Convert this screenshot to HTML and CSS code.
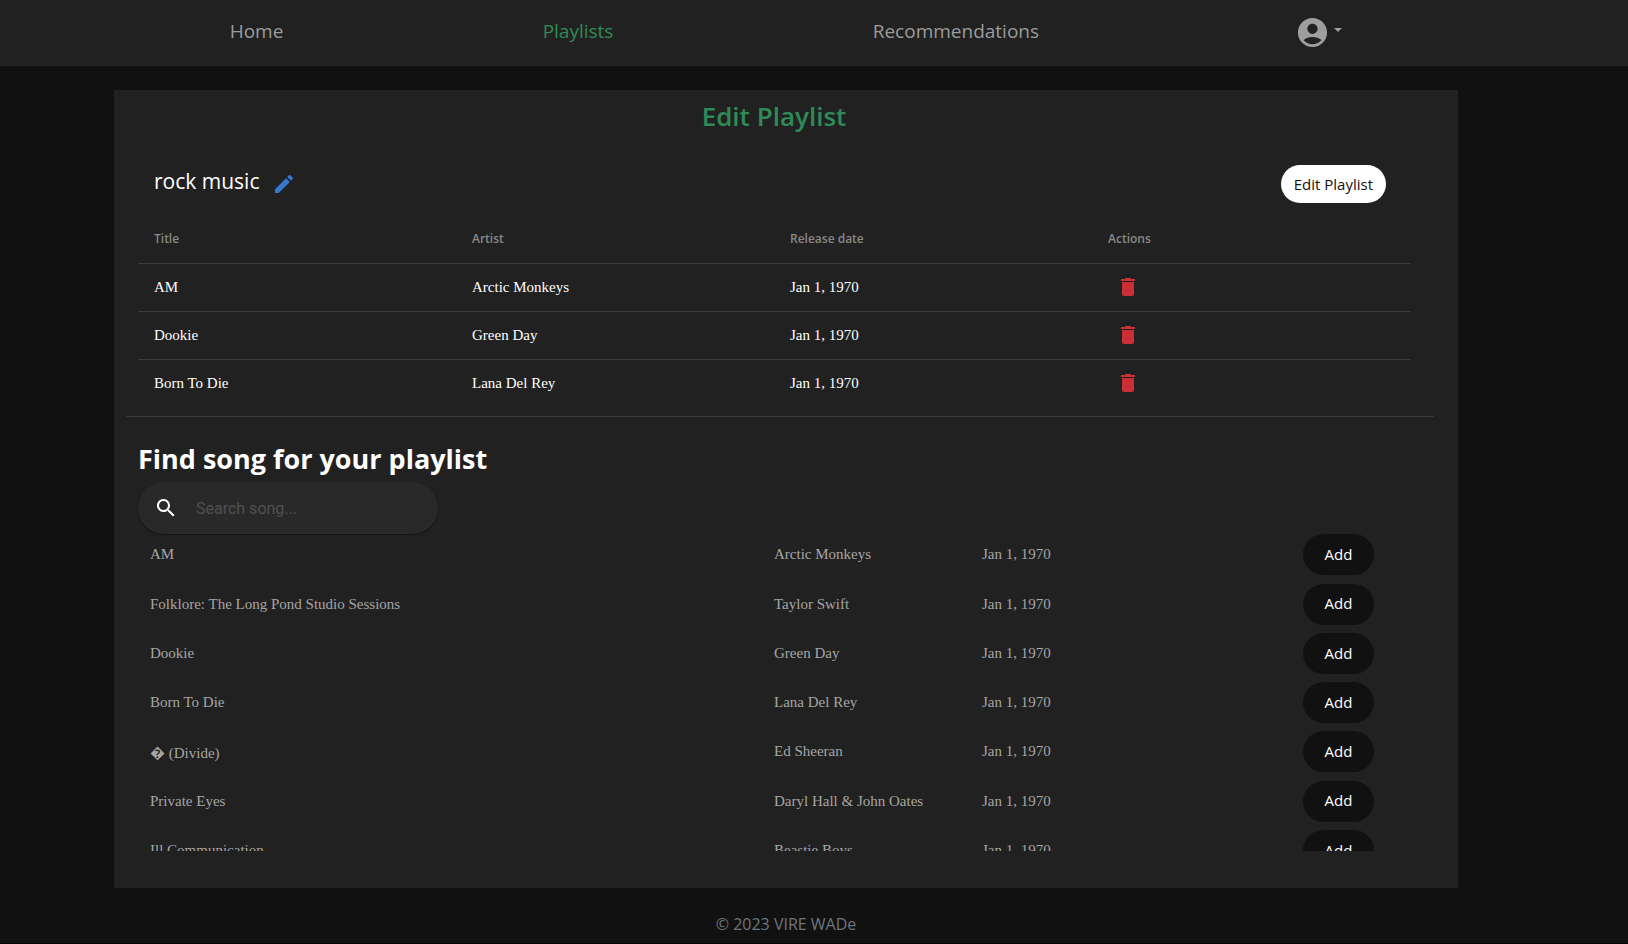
FILE: index.html
```html
<!DOCTYPE html>
<html lang="en">
<head>
<meta charset="utf-8">
<title>Edit Playlist</title>
<link rel="stylesheet" href="styles.css">
</head>
<body>
<svg class="sprite" aria-hidden="true">
  <symbol id="trash" viewBox="0 0 24 24"><path d="M6 19c0 1.1.9 2 2 2h8c1.1 0 2-.9 2-2V7H6v12zM19 4h-3.500l-1-1h-5l-1 1H5v2h14V4z"/></symbol>
</svg>
<header class="topbar">
  <nav class="nav">
    <a class="nav-link" href="#">Home</a>
    <a class="nav-link active" href="#">Playlists</a>
    <a class="nav-link" href="#">Recommendations</a>
    <button class="user" type="button" aria-label="Account">
      <svg class="avatar" viewBox="0 0 24 24"><path d="M12 2C6.480 2 2 6.480 2 12s4.480 10 10 10 10-4.480 10-10S17.520 2 12 2zm0 4c1.930 0 3.500 1.570 3.500 3.500S13.930 13 12 13s-3.500-1.570-3.500-3.500S10.070 6 12 6zm0 14c-2.030 0-4.430-.82-6.140-2.880C7.550 15.800 9.680 15 12 15s4.450.8 6.140 2.120C16.430 19.180 14.030 20 12 20z"/></svg>
      <span class="caret"></span>
    </button>
  </nav>
</header>
<main class="card">
  <h1 class="title">Edit Playlist</h1>
  <div class="playlist-head">
    <h2 class="name">rock music</h2>
    <button class="icon-btn rename" type="button" aria-label="Rename">
      <svg class="icon" viewBox="0 0 24 24"><path d="M3 17.250V21h3.750L17.810 9.940l-3.750-3.750L3 17.250zM20.710 7.040c.39-.39.39-1.020 0-1.410l-2.340-2.340c-.39-.39-1.020-.39-1.410 0l-1.830 1.830 3.750 3.750 1.830-1.830z"/></svg>
    </button>
    <button class="edit-btn" type="button">Edit Playlist</button>
  </div>
  <table class="songs">
    <thead><tr><th>Title</th><th>Artist</th><th>Release date</th><th>Actions</th></tr></thead>
    <tbody>
      <tr><td>AM</td><td>Arctic Monkeys</td><td>Jan 1, 1970</td><td><button class="icon-btn delete" type="button" aria-label="Delete AM"><svg class="icon"><use href="#trash"/></svg></button></td></tr>
      <tr><td>Dookie</td><td>Green Day</td><td>Jan 1, 1970</td><td><button class="icon-btn delete" type="button" aria-label="Delete Dookie"><svg class="icon"><use href="#trash"/></svg></button></td></tr>
      <tr><td>Born To Die</td><td>Lana Del Rey</td><td>Jan 1, 1970</td><td><button class="icon-btn delete" type="button" aria-label="Delete Born To Die"><svg class="icon"><use href="#trash"/></svg></button></td></tr>
    </tbody>
  </table>
  <hr class="divider">
  <h2 class="find-title">Find song for your playlist</h2>
  <label class="search">
    <svg class="icon" viewBox="0 0 24 24"><path d="M15.500 14h-.79l-.28-.27C15.410 12.590 16 11.110 16 9.500 16 5.910 13.090 3 9.500 3S3 5.910 3 9.500 5.910 16 9.500 16c1.610 0 3.090-.59 4.230-1.570l.27.28v.79l5 4.990L20.490 19l-4.990-5zm-6 0C7.010 14 5 11.990 5 9.500S7.010 5 9.500 5 14 7.010 14 9.500 11.990 14 9.500 14z"/></svg>
    <input class="search-input" type="text" placeholder="Search song..." aria-label="Search song">
  </label>
  <div class="results">
    <table class="found">
      <tbody>
        <tr><td>AM</td><td>Arctic Monkeys</td><td>Jan 1, 1970</td><td><button class="add" type="button">Add</button></td></tr>
        <tr><td>Folklore: The Long Pond Studio Sessions</td><td>Taylor Swift</td><td>Jan 1, 1970</td><td><button class="add" type="button">Add</button></td></tr>
        <tr><td>Dookie</td><td>Green Day</td><td>Jan 1, 1970</td><td><button class="add" type="button">Add</button></td></tr>
        <tr><td>Born To Die</td><td>Lana Del Rey</td><td>Jan 1, 1970</td><td><button class="add" type="button">Add</button></td></tr>
        <tr><td>&#xFFFD; (Divide)</td><td>Ed Sheeran</td><td>Jan 1, 1970</td><td><button class="add" type="button">Add</button></td></tr>
        <tr><td>Private Eyes</td><td>Daryl Hall &amp; John Oates</td><td>Jan 1, 1970</td><td><button class="add" type="button">Add</button></td></tr>
        <tr><td>Ill Communication</td><td>Beastie Boys</td><td>Jan 1, 1970</td><td><button class="add" type="button">Add</button></td></tr>
      </tbody>
    </table>
  </div>
</main>
<footer class="footer">© 2023 VIRE WADe</footer>
</body>
</html>
```

FILE: styles.css
```css
* { box-sizing: border-box; }

body {
  margin: 0;
  min-height: 100vh;
  background: #111;
  border-bottom: 1px solid #050305;
  color: #fff;
  font-family: "Segoe UI", "Open Sans", "Noto Sans", sans-serif;
  font-size: 15px;
}

button { font: inherit; border: 0; cursor: pointer; }
h1, h2 { margin: 0; }
.sprite { display: none; }
.icon { display: block; width: 24px; height: 24px; fill: currentColor; }

.topbar {
  background: #212121;
  padding: 0 156px 0 100px;
}
.nav {
  display: flex;
  justify-content: space-around;
  align-items: center;
  height: 66px;
}
.nav-link {
  padding: 8px 8px 12px;
  color: #9b9b9b;
  font-size: 19px;
  line-height: 28px;
  text-decoration: none;
}
.nav-link.active { color: #2e8b57; }
.user {
  display: flex;
  align-items: center;
  gap: 4px;
  padding: 0 8px 2px 5px;
  background: none;
  color: #9e9e9e;
}
.avatar { width: 35px; height: 35px; fill: currentColor; }
.caret {
  margin-bottom: 5px;
  border: 4px solid transparent;
  border-top-color: currentColor;
  border-bottom: 0;
}

.card {
  margin: 24px 170px 0 114px;
  padding: 8px 48px 37px 24px;
  background: #212121;
}
.title {
  color: #2e8b57;
  font-size: 26px;
  font-weight: 600;
  line-height: 36px;
  text-align: center;
}
.playlist-head {
  display: flex;
  align-items: center;
  height: 50px;
  margin-top: 25px;
  padding: 0 24px 0 16px;
}
.name {
  padding-bottom: 6px;
  font-size: 21px;
  font-weight: 400;
  line-height: 30px;
}
.icon-btn { display: block; padding: 8px; background: none; }
.rename { margin-left: 5px; color: #3478d0; }
.delete { color: #cb3036; }
.edit-btn {
  height: 38px;
  margin-left: auto;
  padding: 0 13px;
  border-radius: 19px;
  background: #fff;
  color: #111;
}

.songs {
  width: 100%;
  margin-top: 5px;
  border-collapse: collapse;
  table-layout: fixed;
}
.songs th {
  height: 49px;
  padding: 0 16px;
  color: #888;
  font-size: 12px;
  font-weight: 600;
  text-align: left;
}
.songs td {
  height: 48px;
  padding: 0 16px;
  border-top: 1px solid #3d3d3d;
  font-family: "Times New Roman", "Liberation Serif", serif;
  font-size: 15px;
}
.songs td:last-child { padding: 0 16px; }

.divider {
  margin: 9px -24px 0 -12px;
  border: 0;
  border-top: 1px solid #3a3a3a;
}
.find-title {
  margin-top: 24px;
  font-size: 27px;
  font-weight: 700;
  line-height: 36px;
}
.search {
  display: flex;
  align-items: center;
  gap: 18px;
  width: 300px;
  height: 52px;
  margin-top: 5px;
  padding: 0 16px;
  border-radius: 26px;
  background: #292929;
  box-shadow: 0 1px 1px #151515;
}
.search-input {
  flex: 1;
  min-width: 0;
  padding: 0;
  border: 0;
  outline: 0;
  background: none;
  color: #fff;
  font: 16px Roboto, sans-serif;
}
.search-input::placeholder { color: #505050; }

.results {
  height: 317px;
  padding-right: 24px;
  overflow: hidden;
}
.found {
  width: 100%;
  border-collapse: collapse;
  table-layout: fixed;
}
.found tr { height: 49px; }
.found tr:nth-child(4n + 2) { height: 50px; }
.found td {
  padding: 0 12px 8px;
  color: #a5a5a5;
  font-family: "Times New Roman", "Liberation Serif", serif;
  font-size: 15px;
}
.found td:first-child { width: 50%; }
.found td:last-child { text-align: right; }
.add {
  display: block;
  width: 71px;
  height: 41px;
  margin-left: auto;
  padding: 0 0 2px;
  border-radius: 21px;
  background: #111;
  color: #fff;
  font-family: "Segoe UI", "Open Sans", "Noto Sans", sans-serif;
  font-weight: 500;
}

.footer {
  padding: 24px 56px 6px 0;
  color: #6c757d;
  font-size: 16px;
  line-height: 24px;
  text-align: center;
}
```
